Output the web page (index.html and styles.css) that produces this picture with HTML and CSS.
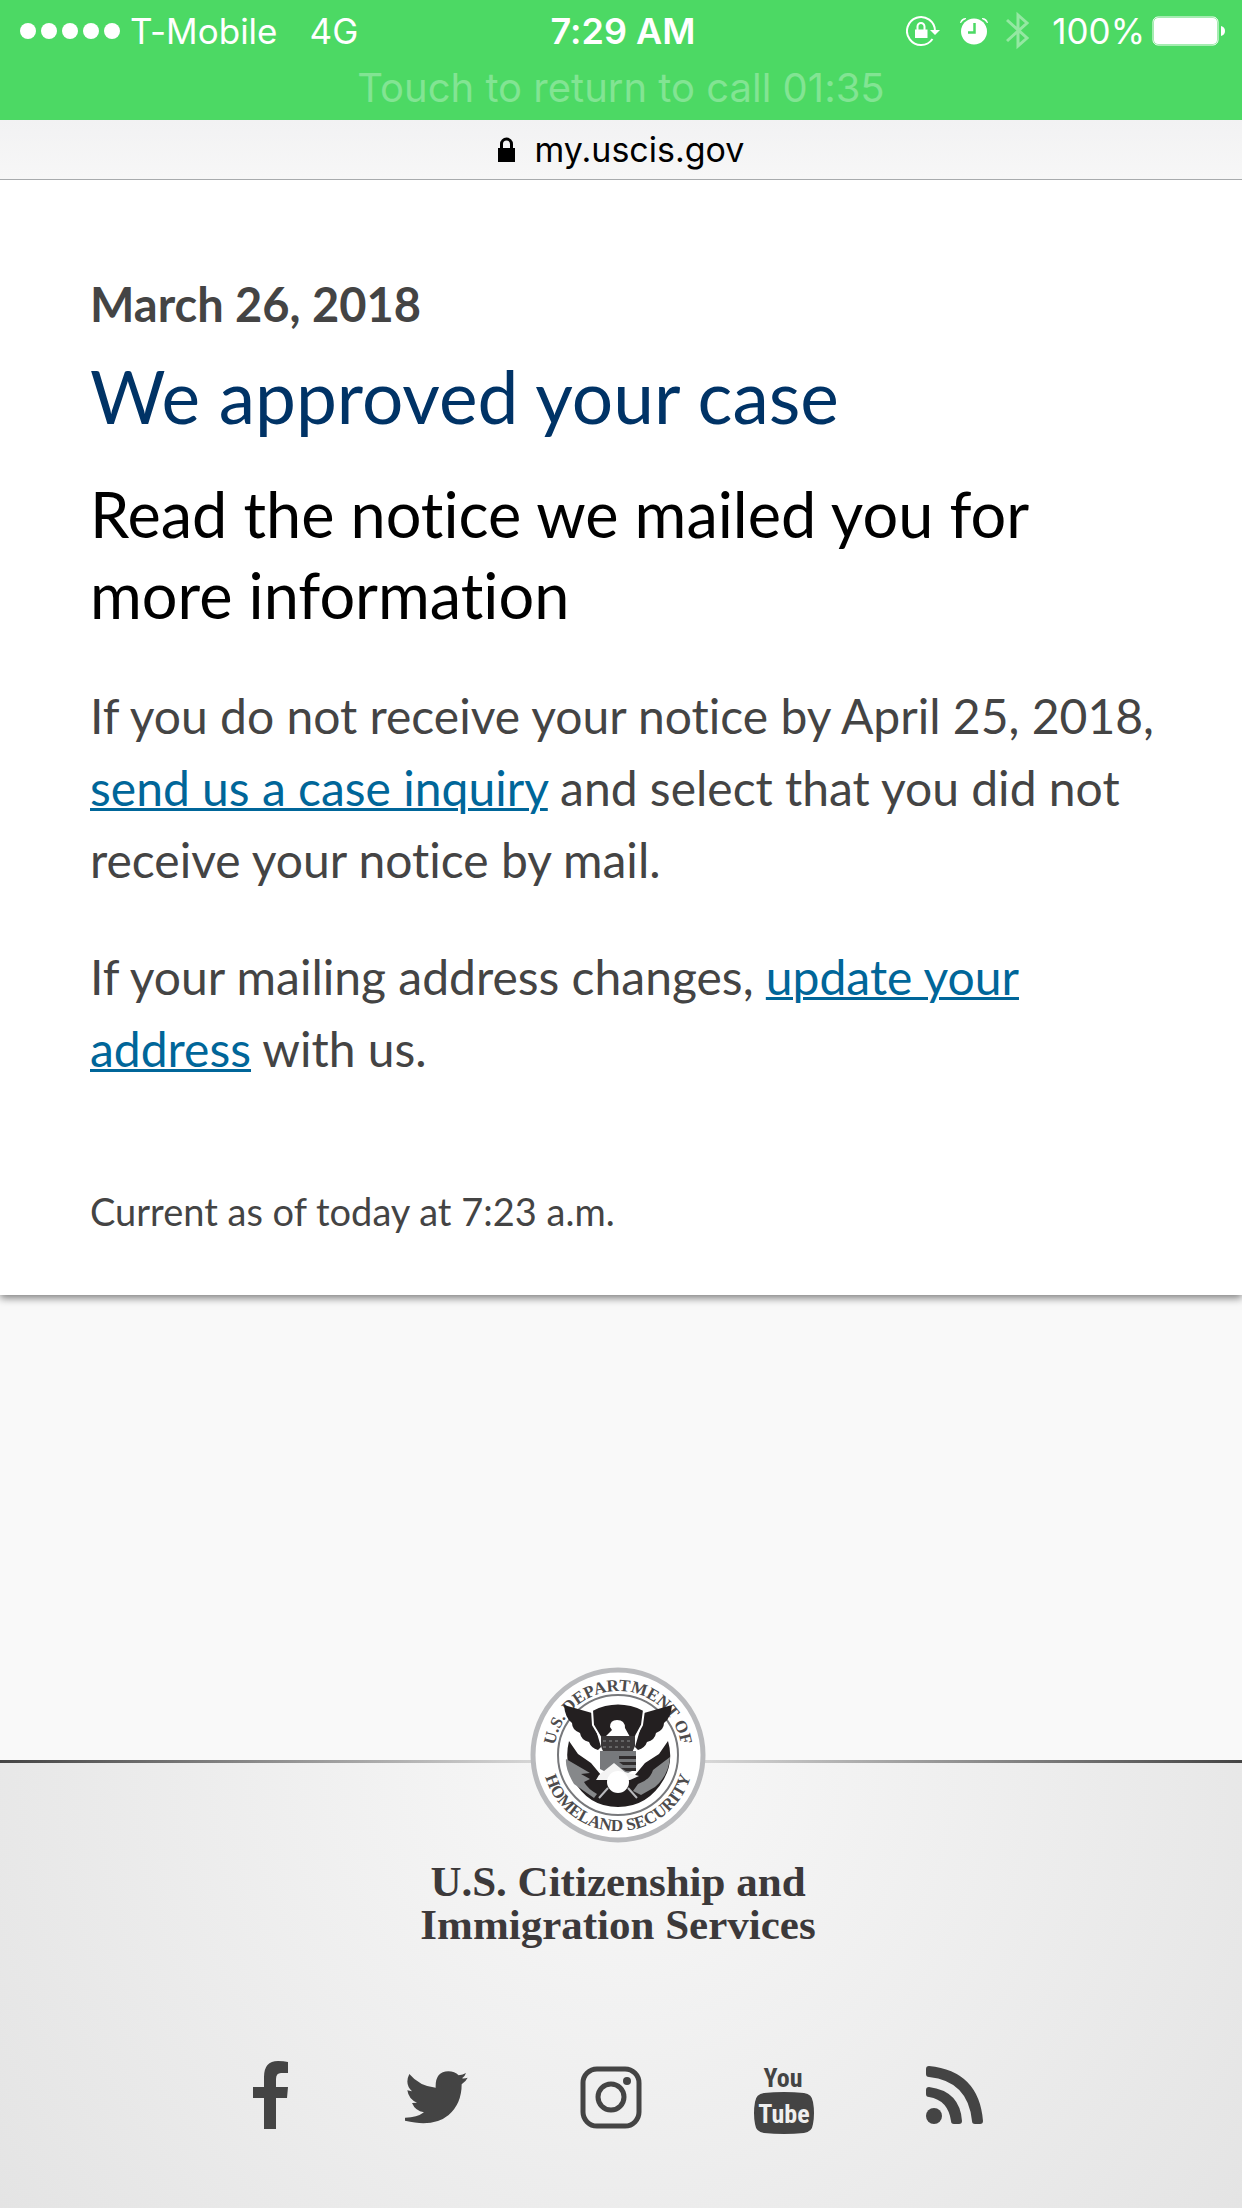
FILE: index.html
```
<!DOCTYPE html>
<html lang="en">
<head>
  <meta charset="UTF-8" />
  <meta name="viewport" content="width=device-width, initial-scale=1.0" />
  <title>Case Status - myUSCIS</title>
  <link rel="stylesheet" href="styles.css">
</head>
<body>

  <header>
    <div class="call-bar">
      <div class="status-row">
        <div class="status-left">
          <span class="signal"><i></i><i></i><i></i><i></i><i></i></span>
          <span class="carrier">T-Mobile</span>
          <span>4G</span>
        </div>
        <div class="clock">7:29 AM</div>
        <div class="status-right">
          <svg class="lock-icon" width="36" height="32" viewBox="0 0 36 32" fill="none" stroke="#fff" stroke-width="2">
            <path d="M29 16A14 14 0 1 0 26.500 24" />
            <path d="M11.500 15v-3.500a3.500 3.500 0 0 1 7 0V15" />
            <path d="M9 14.500h12.500v8.500H9z" fill="#fff" stroke="none" />
            <path d="M24 15h10l-5 5z" fill="#fff" stroke="none" />
          </svg>
          <svg class="alarm-icon" width="28" height="28" viewBox="0 0 28 28" fill="#fff">
            <circle cx="14" cy="14.500" r="13" />
            <path d="M0 6Q1 1 6 1v1Q3 3 1 6zM28 6Q27 1 22 1v1q3 1 5 4z" />
            <path d="M14.500 6v9.500H8" fill="none" stroke="#4cd964" stroke-width="2.500" />
          </svg>
          <svg class="bluetooth-icon" width="24" height="42" viewBox="0 0 24 42" fill="none" stroke="#94e8a2" stroke-width="3">
            <path d="M1 10l20 18-9 8V5l9 8L1 31" />
          </svg>
          <span>100%</span>
          <svg class="battery-icon" width="74" height="30" viewBox="0 0 74 30">
            <rect x="1" y="1" width="65" height="28" rx="5" fill="none" stroke="#fff" />
            <rect x="2" y="2" width="63" height="26" rx="4" fill="#fff" />
            <path d="M69 10q4 1 4 5t-4 5z" fill="#fff" />
          </svg>
        </div>
      </div>
      <div class="call-text">Touch to return to call 01:35</div>
    </div>
    <div class="url-bar">
      <svg width="17" height="25" viewBox="0 0 17 25">
        <path d="M3.500 13V7a5 5 0 0 1 10 0v6" fill="none" stroke="#000" stroke-width="3" />
        <path d="M0 11h17v14H0z" />
      </svg>
      <span>my.uscis.gov</span>
    </div>
  </header>

  <main class="card">
    <p class="date">March 26, 2018</p>
    <h1>We approved your case</h1>
    <h2>Read the notice we mailed you for more information</h2>
    <p>If you do not receive your notice by April 25, 2018, <a href="#">send us a case inquiry</a> and select that you did not receive your notice by mail.</p>
    <p>If your mailing address changes, <a href="#">update your address</a> with us.</p>
    <p class="current">Current as of today at 7:23 a.m.</p>
  </main>

  <footer>
    <div class="brand">
      <svg class="seal" width="176" height="176" viewBox="0 0 176 176">
        <defs>
          <path id="arcTop" d="M24 88a64 64 0 0 1 128 0" />
          <path id="arcBottom" d="M12 88a76 76 0 0 0 152 0" />
        </defs>
        <circle cx="88" cy="88" r="85" fill="#fff" stroke="#b9babd" stroke-width="5" />
        <circle cx="88" cy="88" r="60" fill="#fff" stroke="#77787b" stroke-width="2" />
        <text class="seal-text"><textPath href="#arcTop" startOffset="50%">U.S. DEPARTMENT OF</textPath></text>
        <text class="seal-text"><textPath href="#arcBottom" startOffset="50%">HOMELAND SECURITY</textPath></text>
        <!-- shield and water -->
        <path d="M39 74l9 13 13 9 10 12 34 0 10-12 14-9 9-13q6 20-4 38-16 28-46 28T43 112q-9-18-4-38z" fill="#231f20" />
        <path d="M36 92q-1 10 8 25l20 14 3-4q-9-5-13-12l6-3-9-5 9-1zM140 90l-17 13q-3 10-15 14l-5 7 8 4 14-8q14-12 15-30z" fill="#86888a" />
        <!-- wings -->
        <path d="M34 38l28 8 4 17 5 17-3 3q-7-2-9-8-8-2-9-9-8-3-8-10-7-5-8-18zM142 38l-28 8-4 17-5 17 3 3q7-2 9-8 8-2 9-9 8-3 8-10 7-5 8-18z" fill="#231f20" />
        <path d="M62 43q26-13 52 0l-2 15-6 11-5 8H74l-5-9-6-10z" fill="#231f20" stroke="#fff" stroke-width="2" />
        <path d="M80 60q0-7 7-7 8 0 8 8l5 9H75l7-7z" fill="#fff" />
        <path d="M71 69h34v10q-3 11-17 14-14-2-17-14z" fill="#3b3839" />
        <path d="M73 74h30M73 80h29" stroke="#8b8c8e" stroke-dasharray="3 3" />
        <path d="M70 84h36v18l-18 9-18-9z" fill="#77797c" />
        <path d="M69 108l15-12 11 9 14 4-9 4H66z" fill="#f3f3f3" />
        <path d="M89 89h17v3H89zm0 6h17v3H93zm2 6h15v3H96z" fill="#302d2e" />
        <circle cx="88" cy="115" r="11" fill="#fff" />
        <path d="M78 121l-9 10m29-10l9 10" stroke="#b9babd" stroke-width="2" />
      </svg>
      <p class="agency">U.S. Citizenship and<br>Immigration Services</p>
    </div>
    <nav class="social">
      <a href="#" aria-label="Facebook">
        <svg width="40" height="68" viewBox="0 0 40 68"><path d="M35 1v11h-7q-5 0-5 6v8h12l-1 11H23v31H11V37H0V26h11V16Q11 0 25 0q6 0 10 1z" /></svg>
      </a>
      <a href="#" aria-label="Twitter">
        <svg width="63" height="68" viewBox="523 62 187 204"><path d="M523 232q35 0 56-16-26-4-36-28l15-1q-25-10-29-37l14 3q-23-22-8-52 31 37 79 41-2-48 38-49 19 0 31 12 13-2 22-7-3 10-12 16 9 1 17-2-6 12-18 20 0 58-39 92-30 25-76 25-35 0-90-17z" /></svg>
      </a>
      <a href="#" aria-label="Instagram">
        <svg width="62" height="68" viewBox="0 0 62 68" fill="none" stroke="#444" stroke-width="5">
          <rect x="3" y="8" width="56" height="57" rx="14" />
          <circle cx="31" cy="36" r="13" />
          <circle cx="47" cy="20" r="4" fill="#444" stroke="none" />
        </svg>
      </a>
      <a href="#">
        <svg width="60" height="73" viewBox="0 0 60 73">
          <path d="M10 32q20-2 40 0 8 1 9 9 2 11 0 22-1 8-9 9-20 2-40 0-8-1-9-9-2-11 0-22 1-8 9-9z" />
          <text class="you" x="29" y="26">You</text>
          <text class="tube" x="30" y="62">Tube</text>
        </svg>
      </a>
      <a href="#" aria-label="RSS">
        <svg width="57" height="68" viewBox="0 0 57 68">
          <circle cx="8" cy="55" r="8" />
          <path d="M0 29q0-3 3-3 31 4 33 34 0 3-3 3h-5q-3 0-3-3-3-21-22-24-3 0-3-3zM0 8q0-3 3-3 50 5 54 55 0 3-3 3h-5q-3 0-3-3-4-40-43-44-3 0-3-3z" />
        </svg>
      </a>
    </nav>
  </footer>

</body>
</html>
```
FILE: styles.css
```
* {
  box-sizing: border-box;
}

body {
  margin: 0;
  min-height: 100vh;
  display: flex;
  flex-direction: column;
  font-family: Lato, "Open Sans", sans-serif;
  font-variant-ligatures: none;
  color: #444;
  background: #f9f9f9;
}

p, h1, h2 {
  margin: 0;
}

svg {
  display: block;
}

header {
  position: relative;
  z-index: 1;
}

.call-bar {
  height: 120px;
  background: #4cd964;
  color: #fff;
  font-family: Inter, sans-serif;
  font-size: 35px;
}

.status-row {
  display: grid;
  grid-template-columns: 1fr auto 1fr;
  align-items: center;
  height: 62px;
  padding: 0 16px 0 20px;
}

.status-left,
.status-right,
.signal {
  display: flex;
  align-items: center;
}

.signal {
  gap: 5px;
  margin-right: 10px;
}

.signal i {
  width: 16px;
  height: 16px;
  border-radius: 50%;
  background: #fff;
}

.carrier {
  margin-right: 32px;
}

.clock {
  font-size: 36px;
  font-weight: 600;
}

.status-right {
  justify-content: flex-end;
}

.lock-icon,
.alarm-icon {
  margin-right: 18px;
}

.bluetooth-icon {
  margin-right: 22px;
}

.battery-icon {
  margin-left: 7px;
}

.call-text {
  text-align: center;
  font-size: 40px;
  line-height: 52px;
  color: #82e493;
}

.url-bar {
  display: flex;
  justify-content: center;
  align-items: center;
  gap: 20px;
  height: 60px;
  border-bottom: 1px solid #a8abad;
  background: linear-gradient(#f2f2f3, #f7f7f7);
  color: #000;
  font-family: Inter, sans-serif;
  font-size: 34px;
}

.card {
  padding: 88px 72px 48px 90px;
  background: #fff;
  box-shadow: 0 3px 8px rgba(0, 0, 0, 0.5);
  font-size: 48px;
  line-height: 72px;
}

.card .date {
  font-size: 47px;
  font-weight: bold;
}

.card h1 {
  margin-top: 8px;
  font-size: 73px;
  line-height: 96px;
  font-weight: normal;
  color: #003366;
}

.card h2 {
  margin: 29px 0 45px;
  font-size: 63px;
  line-height: 81px;
  font-weight: normal;
  color: #000;
}

.card p + p {
  margin-top: 45px;
}

.card a {
  color: #006699;
  text-decoration-thickness: 3px;
}

.card .current {
  margin-top: 90px;
  font-size: 38px;
}

footer {
  flex: 1;
  margin-top: 465px;
  padding: 0 6px 72px 0;
  border-top: 3px solid;
  border-image: linear-gradient(90deg, #444, #ddd 45%, #ddd 55%, #444) 1;
  background: radial-gradient(circle at 50% 0, #f8f8f8, #e4e4e4);
}

.brand {
  display: flex;
  flex-direction: column;
  align-items: center;
  margin-top: -96px;
}

.seal-text {
  font: bold 17px "Liberation Serif", serif;
  text-anchor: middle;
  fill: #4d4b4c;
}

.agency {
  margin-top: 17px;
  text-align: center;
  font: bold 43px/43px "Liberation Serif", serif;
  color: #3c393a;
}

.social {
  display: flex;
  justify-content: center;
  align-items: flex-start;
  gap: 112px;
  margin-top: 115px;
}

.social a {
  fill: #444;
}

.you,
.tube {
  font-family: "Roboto Condensed", "Liberation Sans Narrow", Roboto, sans-serif;
  font-weight: bold;
  font-size: 26px;
  text-anchor: middle;
}

.tube {
  fill: #efefef;
}
```
